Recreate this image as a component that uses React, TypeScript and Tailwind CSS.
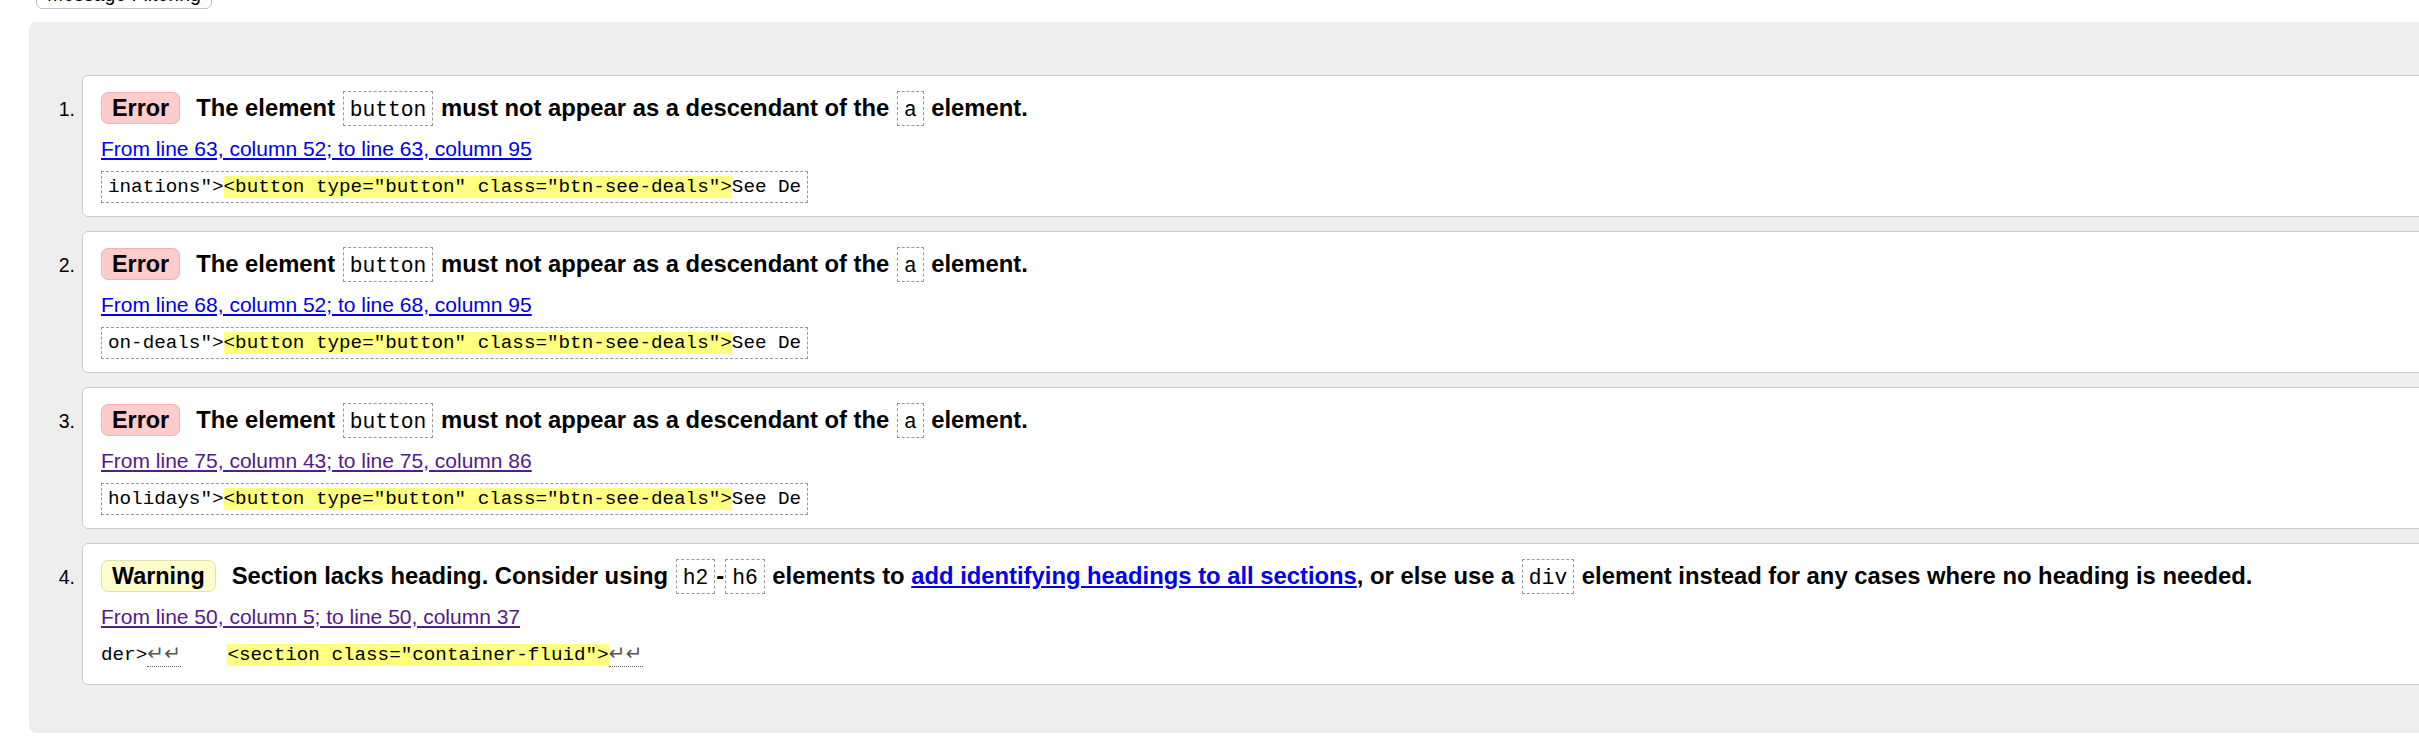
import React from "react";

const mono = "font-['Liberation_Mono','DejaVu_Sans_Mono',monospace]";

function HCode({ children }: { children: React.ReactNode }) {
  return (
    <code
      className={`inline-block border border-dashed border-[#999999] px-[6px] mx-[1px] pt-[5px] pb-[2px] leading-[26px] text-[21.3px] font-normal text-black ${mono}`}
    >
      {children}
    </code>
  );
}

function Badge({ kind }: { kind: "error" | "warning" }) {
  const cls =
    kind === "error"
      ? "bg-[#ffcccc] border-[#e8b4b4]"
      : "bg-[#ffffcc] border-[#e2e2b0]";
  return (
    <span
      className={`inline-flex h-[32px] items-center rounded-[7px] border px-[10px] text-[23.4px] font-bold leading-[24px] text-black ${cls}`}
    >
      {kind === "error" ? "Error" : "Warning"}
    </span>
  );
}

type Item = {
  n: number;
  kind: "error" | "warning";
  heading: React.ReactNode;
  loc: string;
  visited: boolean;
  extract: React.ReactNode;
  boxed: boolean;
};

const errHeading = (
  <>
    The element <HCode>button</HCode> must not appear as a descendant of the{" "}
    <HCode>a</HCode> element.
  </>
);

const btnExtract = (pre: string) => (
  <>
    {pre}
    <span className="bg-[#ffff80]">{'<button type="button" class="btn-see-deals">'}</span>
    {"See De"}
  </>
);

const Ret = () => (
  <span className="border-b border-dotted border-[#666666]">
    <span className="inline-block w-[17px] text-center font-['DejaVu_Sans',sans-serif] text-[20px] leading-[20px] text-[#555555]">
      ↵
    </span>
    <span className="inline-block w-[17px] text-center font-['DejaVu_Sans',sans-serif] text-[20px] leading-[20px] text-[#555555]">
      ↵
    </span>
  </span>
);

const items: Item[] = [
  {
    n: 1,
    kind: "error",
    heading: errHeading,
    loc: "From line 63, column 52; to line 63, column 95",
    visited: false,
    extract: btnExtract('inations">'),
    boxed: true,
  },
  {
    n: 2,
    kind: "error",
    heading: errHeading,
    loc: "From line 68, column 52; to line 68, column 95",
    visited: false,
    extract: btnExtract('on-deals">'),
    boxed: true,
  },
  {
    n: 3,
    kind: "error",
    heading: errHeading,
    loc: "From line 75, column 43; to line 75, column 86",
    visited: true,
    extract: btnExtract('holidays">'),
    boxed: true,
  },
  {
    n: 4,
    kind: "warning",
    heading: (
      <>
        Section lacks heading. Consider using <HCode>h2</HCode>-<HCode>h6</HCode> elements to{" "}
        <a href="#" className="text-[#0000ee] underline">
          add identifying headings to all sections
        </a>
        , or else use a <HCode>div</HCode> element instead for any cases where no heading is
        needed.
      </>
    ),
    loc: "From line 50, column 5; to line 50, column 37",
    visited: true,
    extract: (
      <>
        {"der>"}
        <Ret />
        <span className="whitespace-pre">{"    "}</span>
        <span className="bg-[#ffff80]">{'<section class="container-fluid">'}</span>
        <Ret />
      </>
    ),
    boxed: false,
  },
];

export default function App() {
  return (
    <div className="w-[2419px] h-[744px] overflow-hidden bg-white text-black font-['Liberation_Sans',Arial,sans-serif]">
      <div className="pl-[36px]">
        <div className="-mt-[22px] block w-fit rounded-[6px] border border-[#c4c4c4] bg-white px-[10px] pt-[4px] pb-[3px] text-[19.5px] leading-[22px] whitespace-nowrap">
          Message Filtering
        </div>
      </div>
      <div className="ml-[29px] mt-[13px] w-[2460px] rounded-[7px] bg-[#eeeeee] pt-[53px] pb-[48px]">
        <ol className="flex flex-col gap-[14px]">
          {items.map((it) => (
            <li key={it.n} className="flex">
              <div className="w-[53px] shrink-0 pr-[7px] pt-[23px] text-right text-[19.5px] leading-[22px]">
                {it.n}.
              </div>
              <div className="flex-1 rounded-[6px] border border-[#cccccc] bg-white pl-[18px] pt-[14px] pb-[13px]">
                <div className="flex h-[36px] items-center whitespace-nowrap">
                  <Badge kind={it.kind} />
                  <span className="ml-[16px] text-[23.8px] font-bold leading-[24px]">
                    {it.heading}
                  </span>
                </div>
                <div className="mt-[11px] text-[21px] leading-[24px]">
                  <a
                    href="#"
                    className={`underline ${it.visited ? "text-[#551a8b]" : "text-[#0000ee]"}`}
                  >
                    {it.loc}
                  </a>
                </div>
                <div className="mt-[10px]">
                  <div
                    className={`inline-block h-[32px] whitespace-pre text-[19.25px] ${mono} ${
                      it.boxed
                        ? "border border-dashed border-[#999999] px-[6px] leading-[30px]"
                        : "leading-[32px]"
                    }`}
                  >
                    {it.extract}
                  </div>
                </div>
              </div>
            </li>
          ))}
        </ol>
      </div>
    </div>
  );
}
